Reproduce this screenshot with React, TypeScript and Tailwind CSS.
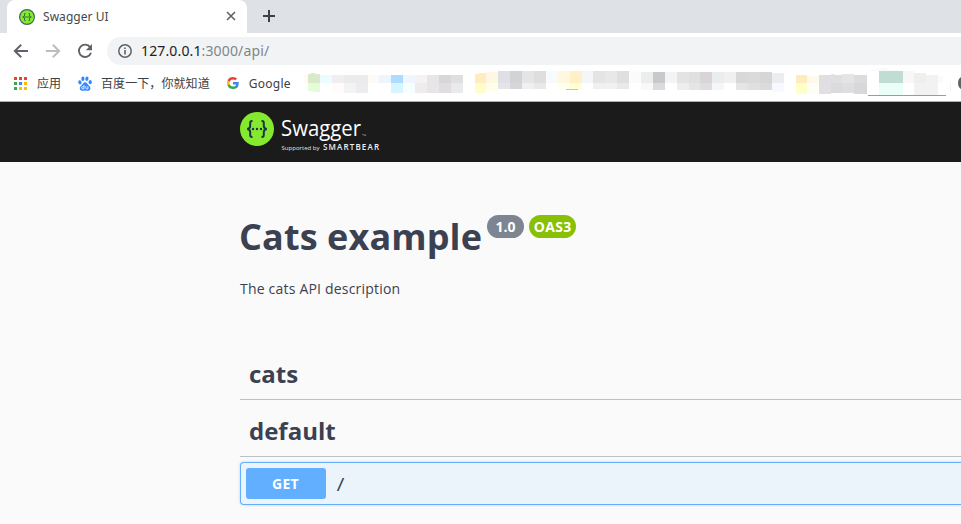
import React from "react";

const UI = "font-['Noto_Sans','Noto_Sans_CJK_SC',sans-serif]";
const SANS = "font-['Open_Sans','Noto_Sans',sans-serif]";

type Cell = [number, number, number, number, string];

// Blurred-out bookmarks: x, y, width, height, colour (relative to the strip)
const MOSAIC: Cell[] = [
  [304, 9, 4, 8, "#fffbf3"], [308, 8, 12, 9, "#d8eaca"], [311, 7, 4, 1, "#d8eaca"], [320, 9, 12, 8, "#e9fcff"], [332, 9, 12, 8, "#f0eeee"],
  [344, 9, 24, 8, "#ebebec"], [368, 9, 11, 8, "#fbfaf9"], [379, 9, 12, 8, "#edf6ff"], [391, 9, 12, 8, "#aedbff"],
  [403, 9, 12, 8, "#f0f5ff"], [415, 9, 12, 8, "#f4f2f3"], [427, 9, 12, 8, "#e8e5e7"], [439, 9, 12, 8, "#d8d7d8"],
  [451, 9, 12, 8, "#dfdfe0"],
  [308, 17, 12, 8, "#e5fcd8"], [313, 25, 7, 1, "#e5fcd8"], [332, 17, 12, 10, "#fffbfa"], [344, 17, 12, 10, "#f3f3f3"], [356, 17, 12, 10, "#ececef"],
  [391, 17, 12, 10, "#d5f5ff"], [403, 17, 12, 10, "#f5ffff"], [415, 17, 12, 10, "#efedec"], [427, 17, 12, 10, "#e7e5e7"],
  [439, 17, 12, 10, "#e0dcdf"], [451, 17, 12, 10, "#e8eaec"],
  [475, 8, 11, 9, "#ffedc0"], [479, 7, 7, 1, "#ffedc0"], [486, 6, 12, 11, "#fff7e4"], [498, 5, 12, 12, "#dfe0e5"], [510, 5, 12, 12, "#d2d3d7"],
  [522, 5, 12, 12, "#e5e5e5"], [534, 5, 12, 12, "#dedede"], [546, 5, 12, 12, "#f8fbfe"], [558, 5, 12, 12, "#fff8df"],
  [570, 5, 12, 12, "#fff0c7"], [582, 5, 11, 12, "#f5f6fa"], [593, 5, 12, 12, "#e4e4e4"], [605, 5, 12, 12, "#eae7e8"],
  [617, 5, 12, 12, "#dfdfe0"], [629, 5, 12, 12, "#fbfbfb"], [641, 6, 12, 11, "#ebeeed"], [653, 6, 12, 11, "#c7c9cb"],
  [665, 6, 12, 11, "#f4f4f4"], [677, 6, 12, 11, "#e3e3e4"], [689, 6, 11, 11, "#e0e0e0"], [700, 6, 12, 11, "#d8d5d7"],
  [712, 6, 12, 11, "#eaedf0"], [724, 6, 12, 11, "#f1f0ee"], [736, 6, 12, 11, "#d8d8d8"], [748, 6, 12, 11, "#dadadb"],
  [760, 6, 12, 11, "#d5d6d6"], [772, 7, 12, 10, "#ecedf1"],
  [475, 17, 11, 10, "#fffecb"], [486, 17, 12, 8, "#ffffe9"], [498, 17, 12, 6, "#e6e4e8"], [510, 17, 12, 6, "#d6d6d8"], [522, 17, 12, 6, "#f0f0f0"],
  [534, 17, 12, 6, "#e9e9e9"], [558, 17, 12, 6, "#ffffee"], [570, 17, 12, 6, "#ffffd3"], [566, 23, 12, 1, "#e9c64a"],
  [593, 17, 12, 6, "#f0f0f0"], [605, 17, 12, 6, "#f2f0f1"], [617, 17, 12, 6, "#e9e9e9"],
  [641, 17, 12, 7, "#f9f9f9"], [653, 17, 12, 7, "#dadbde"], [677, 17, 12, 7, "#eeedf0"], [689, 17, 11, 7, "#e7e5e3"],
  [700, 17, 12, 7, "#dedee0"], [712, 17, 12, 7, "#f5f6fa"], [736, 17, 12, 7, "#e4e5e5"], [748, 17, 12, 7, "#dfe0e1"],
  [760, 17, 12, 7, "#dbdbdd"], [772, 17, 12, 9, "#f8f9fe"],
  [796, 9, 11, 8, "#ffebbc"], [807, 10, 12, 7, "#fff9ed"], [819, 9, 23, 8, "#dfdfe1"], [831, 8, 4, 1, "#e8e8e8"], [842, 8, 12, 9, "#e4e4e4"], [854, 9, 13, 8, "#dcdcde"],
  [796, 17, 11, 11, "#ffffc8"], [807, 17, 12, 11, "#fffef6"], [819, 17, 12, 11, "#e1dfe2"], [831, 17, 11, 10, "#dbdbdd"],
  [842, 17, 12, 10, "#dededf"], [854, 17, 13, 11, "#d8d8da"],
  [870, 4, 9, 1, "#f5f8fc"], [877, 2, 10, 3, "#f7f9fd"], [879, 5, 24, 12, "#c1dcd2"], [887, 4, 12, 1, "#f7faf8"], [903, 5, 11, 12, "#f9f7f5"], [914, 7, 12, 10, "#efefee"],
  [926, 9, 12, 8, "#f2f2f3"], [938, 10, 5, 7, "#fbfbfb"], [879, 17, 24, 12, "#eafff7"], [914, 17, 24, 12, "#f2f2f2"], [950, 17, 1, 8, "#f4f4f4"],
  [868, 29, 78, 1, "#9b9b9d"],
];

function Favicon() {
  return (
    <svg width="16" height="16" viewBox="0 0 16 16" className="shrink-0">
      <circle cx="8" cy="8" r="7.4" fill="#85ea2d" stroke="#426b58" strokeWidth="1.2" />
      <path d="M6.500 4.500H5.500V7L3.700 8l1.800 1v2.500h1M9.500 4.500h1V7l1.800 1-1.800 1v2.500h-1M5 8h6" fill="none" stroke="#3a7040" strokeWidth="1" />
    </svg>
  );
}

function Tabs() {
  return (
    <div className="flex h-[33px] bg-[#dee1e6]">
      <div className="ml-[7px] flex h-full w-[240px] items-center rounded-t-lg bg-white pl-3 pr-[10px]">
        <Favicon />
        <span className="ml-2 flex-1 whitespace-nowrap text-[12px] tracking-[0.05px] text-[#45484c]">Swagger UI</span>
        <svg width="12" height="12" viewBox="0 0 12 12" className="-mt-px"><path d="m2 2 8 8m0-8-8 8" stroke="#5f6368" strokeWidth="1.6" /></svg>
      </div>
      <svg width="14" height="14" viewBox="0 0 14 14" className="ml-[15px] mt-[9px]"><path d="M7 1v12M1 7h12" stroke="#3c4043" strokeWidth="2" /></svg>
    </div>
  );
}

function AddressBar() {
  return (
    <div className="flex h-[35px] items-center pl-[13px] pt-px">
      <svg width="16" height="16" viewBox="0 0 16 16"><path d="M15 8H2.300M8.200 1.700 1.800 8l6.400 6.300" fill="none" stroke="#5f6368" strokeWidth="1.900" /></svg>
      <svg width="16" height="16" viewBox="0 0 16 16" className="ml-4"><path d="M1 8h12.700M7.800 1.700 14.200 8l-6.400 6.300" fill="none" stroke="#babcbe" strokeWidth="1.900" /></svg>
      <svg width="16" height="16" viewBox="0 0 16 16" className="ml-4"><path d="M13.200 4.200A6.200 6.200 0 1 0 14 9.800" fill="none" stroke="#5f6368" strokeWidth="1.900" /><path d="M15 1v6.200H8.800z" fill="#5f6368" /></svg>
      <div className="ml-[14px] flex h-7 flex-1 items-center rounded-l-full bg-[#f1f3f4] pl-[11px]">
        <svg width="14" height="14" viewBox="0 0 14 14"><circle cx="7" cy="7" r="6.200" fill="none" stroke="#5f6368" strokeWidth="1.500" /><path d="M7 6v4.400M7 3.400V5" stroke="#5f6368" strokeWidth="1.600" /></svg>
        <span className="ml-[9px] whitespace-nowrap text-[14px] leading-5 tracking-[0.14px] text-[#202124]">127.0.0.1<span className="text-[#80868b]">:3000/api/</span></span>
      </div>
    </div>
  );
}

const APP_COLORS = ["#ea4335", "#ea4335", "#ea4335", "#34a853", "#4285f4", "#fbbc05", "#34a853", "#fbbc05", "#fbbc05"];

function Bookmarks() {
  return (
    <div className="relative h-[33px]" lang="zh-CN">
      <svg width="961" height="33" viewBox="0 0 961 33" shapeRendering="crispEdges" className="absolute left-0 top-[-2px]">
        {MOSAIC.map(([x, y, w, h, fill], i) => <rect key={i} x={x} y={y} width={w} height={h} fill={fill} />)}
        <path d="M961 11Q958 13 958 17t3 6" fill="#5f6368" shapeRendering="auto" />
      </svg>
      <div className="flex h-[30px] items-center pl-[14px] text-[12px] text-[#3c4043]">
        <div className="grid grid-cols-3 gap-[2px]">
          {APP_COLORS.map((c, i) => <i key={i} className="size-[3px]" style={{ background: c }} />)}
        </div>
        <span className="ml-[10px] mt-[2px]">应用</span>
        <svg width="14" height="15" viewBox="0 0 14 15" className="ml-[17px]" fill="#3388ff">
          <ellipse cx="1.900" cy="6.400" rx="1.600" ry="2.100" transform="rotate(-12 1.900 6.400)" />
          <ellipse cx="4.900" cy="2.700" rx="1.600" ry="2.200" />
          <ellipse cx="8.900" cy="2.700" rx="1.600" ry="2.200" transform="rotate(10 8.900 2.700)" />
          <ellipse cx="12.200" cy="6.200" rx="1.600" ry="2.100" />
          <path d="M7 6.200c1.600 0 2.200 1.500 3.400 2.700 1.500 1.400 2.300 2.300 2 3.800-.4 2.200-2.500 2.200-5.200 1.800-2.800.4-5 .3-5.400-1.800-.3-1.600.8-2.500 2.100-3.800C5 7.800 5.500 6.200 7 6.200z" />
          <path d="M6 9v3.900H4.700q-1.100 0-1.100-1.100T4.700 10.700H6M7.800 10.200v2q0 .7.700.7h1.400v-2.700" fill="none" stroke="#fff" strokeWidth=".8" />
        </svg>
        <span className="ml-[9px] mt-[2px] whitespace-nowrap tracking-[0.08px]">百度一下，你就知道</span>
        <svg width="12" height="12" viewBox="0 0 24 24" className="ml-[17px]">
          <path d="M23.500 12.300q0-1.300-.2-2.300H12v4.800h6.500q-.4 2.100-2.300 3.400v3.600h4q3.300-3.400 3.300-9.500z" fill="#4285f4" />
          <path d="M12 24q5 0 8.200-3l-4-3.100q-1.600 1.200-4.200 1.200-5 0-6.700-4.800H1.200v3.200Q4.400 24 12 24z" fill="#34a853" />
          <path d="M5.300 14.300q-.8-2.300 0-4.600V6.500H1.200q-2.400 5.500 0 11z" fill="#fbbc05" />
          <path d="M12 4.800q2.800 0 4.600 1.800l3.600-3.500Q16.800 0 12 0 4.500 0 1.200 6.500l4.100 3.200Q7 4.800 12 4.800z" fill="#ea4335" />
        </svg>
        <span className="ml-[10px] mt-[2px] tracking-[0.25px]">Google</span>
      </div>
    </div>
  );
}

function Header() {
  return (
    <header className="flex h-[61px] border-t border-[#b2b2b2] bg-[#1b1b1b] pl-[240px] pt-[10px]">
      <svg width="145" height="42" viewBox="0 0 145 42">
        <circle cx="17" cy="17" r="17" fill="#85ea2d" />
        <g fill="none" stroke="#173647" strokeWidth="2">
          <path d="M12.500 9H12Q10.200 9 10.200 11v3q0 2.600-3 3 3 .4 3 3v3q0 2 1.800 2h.5M21.500 9h.5Q23.800 9 23.800 11v3q0 2.600 3 3-3 .4-3 3v3q0 2-1.800 2h-.5" />
        </g>
        <g fill="#173647"><circle cx="13" cy="17" r="1.200" /><circle cx="17" cy="17" r="1.200" /><circle cx="21" cy="17" r="1.200" /></g>
        <g fill="#fff" className={SANS}>
          <text x="41" y="24" fontSize="22" textLength="80" lengthAdjust="spacingAndGlyphs">Swagger</text>
          <path d="M122 22.500h1.500M124 24v-1.500l.8 1 .8-1V24" fill="none" stroke="#aaa" strokeWidth=".5" />
          <text x="41.500" y="37.600" fontSize="6" textLength="38" fill="#e4e4e4">Supported by</text>
          <text x="83" y="38" fontSize="8" fontWeight="600" textLength="56" fill="#f0f0f0">SMARTBEAR</text>
        </g>
      </svg>
    </header>
  );
}

export default function App() {
  return (
    <div className={`h-[524px] w-[961px] overflow-hidden bg-white ${UI}`}>
      <Tabs />
      <AddressBar />
      <Bookmarks />
      <Header />
      <main className={`h-[362px] bg-[#fafafa] pl-[240px] text-[#3b4151] ${SANS}`}>
        <div className="flex h-[116px] items-start pt-[53px]">
          <h1 className="-ml-px whitespace-nowrap text-[36px] font-bold leading-[44px] tracking-[0.110px]">Cats example</h1>
          <span className="ml-[5px] flex h-[23px] w-[37px] items-center justify-center rounded-full bg-[#7d8492] text-[14px] font-bold text-white">1.0</span>
          <span className="ml-[5px] flex h-[23px] w-[47px] items-center justify-center rounded-full bg-[#89bf04] text-[14px] font-bold tracking-[0.3px] text-white">OAS3</span>
        </div>
        <p className="h-[68px] text-[14px] leading-[21px] tracking-[0.200px]">The cats API description</p>
        <h2 className="h-[54px] border-b border-[#bfc0c3] pl-[9px] pt-[12px] text-[24px] font-bold leading-[32px]">cats</h2>
        <h2 className="h-[57px] border-b border-[#bfc0c3] pl-[9px] pt-[15px] text-[24px] font-bold leading-[32px]">default</h2>
        <div className="mt-[5px] flex h-[43px] items-center rounded-l-[4px] border border-r-0 border-[#61affe] bg-[#ebf3fb] pl-[5px] shadow-[0_0_3px_rgba(0,0,0,0.19)]">
          <span className="flex h-[31px] w-[80px] items-center justify-center rounded-[3px] bg-[#61affe] pr-px text-[14px] font-bold tracking-[0.3px] text-white">GET</span>
          <span className="ml-[10px] mt-[3px] font-['DejaVu_Sans_Mono',monospace] text-[15px] font-bold leading-5">/</span>
        </div>
      </main>
    </div>
  );
}
